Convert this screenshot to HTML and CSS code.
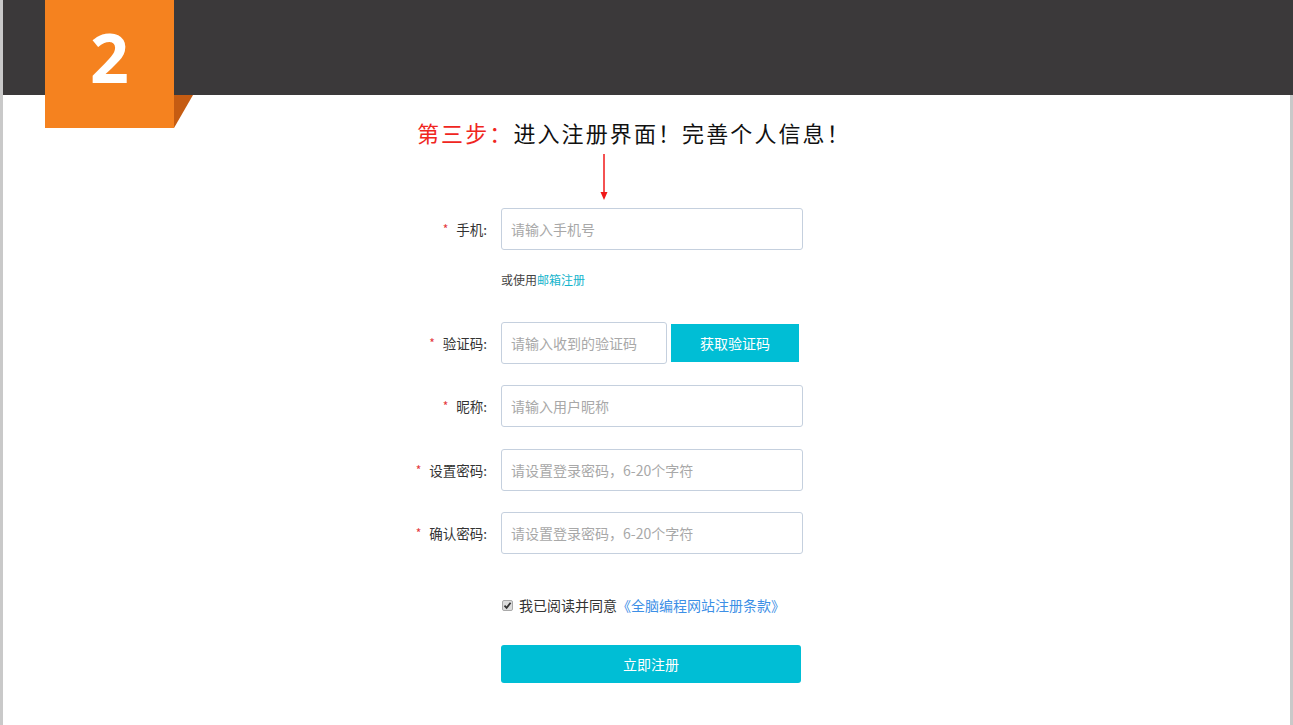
FILE: index.html
```html
<!DOCTYPE html>
<html lang="zh-CN">
<head>
<meta charset="utf-8">
<title>注册</title>
<link rel="stylesheet" href="styles.css">
</head>
<body>
<div class="page">
  <header class="topbar">
    <div class="badge"><span class="badge-num">2</span></div>
  </header>
  <main class="content">
    <h1 class="step-title"><span class="step-red">第三步：</span>进入注册界面！完善个人信息！</h1>
    <svg class="arrow" width="10" height="47" viewBox="0 0 10 47">
      <line x1="5" y1="0" x2="5" y2="40" stroke="#f01818" stroke-width="1.5"/>
      <polygon points="1.5,38 8.5,38 5,46" fill="#f01818"/>
    </svg>
    <form class="form">
      <div class="row">
        <label class="label"><span class="star">*</span>手机:</label>
        <input class="field" type="text" placeholder="请输入手机号">
      </div>
      <div class="hint">或使用<a class="hint-link" href="#">邮箱注册</a></div>
      <div class="row row-code">
        <label class="label"><span class="star">*</span>验证码:</label>
        <input class="field field-code" type="text" placeholder="请输入收到的验证码">
        <button class="btn-code" type="button">获取验证码</button>
      </div>
      <div class="row row-gap">
        <label class="label"><span class="star">*</span>昵称:</label>
        <input class="field" type="text" placeholder="请输入用户昵称">
      </div>
      <div class="row row-gap2">
        <label class="label"><span class="star">*</span>设置密码:</label>
        <input class="field" type="password" placeholder="请设置登录密码，6-20个字符">
      </div>
      <div class="row row-gap">
        <label class="label"><span class="star">*</span>确认密码:</label>
        <input class="field" type="password" placeholder="请设置登录密码，6-20个字符">
      </div>
      <div class="agree">
        <span class="check"><svg width="9" height="9" viewBox="0 0 9 9"><path d="M1.5 4.6 L3.6 6.8 L7.6 1.8" fill="none" stroke="#333" stroke-width="1.8"/></svg></span>
        <span class="agree-text">我已阅读并同意</span><a class="agree-link" href="#">《全脑编程网站注册条款》</a>
      </div>
      <button class="btn-submit" type="button">立即注册</button>
    </form>
  </main>
</div>
</body>
</html>
```
FILE: styles.css
```css
html, body {
  margin: 0;
  padding: 0;
  background: #ffffff;
}
body {
  font-family: "Noto Sans CJK SC", "Noto Sans", sans-serif;
}
.page {
  border-left: 3px solid #c9c9c9;
  height: 725px;
  box-sizing: border-box;
  display: flex;
  flex-direction: column;
  position: relative;
}
.topbar {
  height: 95px;
  background: #3b393a;
  flex: none;
}
.badge {
  position: absolute;
  left: 42px;
  top: 0;
  width: 129px;
  height: 128px;
  background: #f5821f;
  display: flex;
  align-items: center;
  justify-content: center;
  z-index: 2;
}
.badge::after {
  content: "";
  position: absolute;
  left: 129px;
  top: 95px;
  width: 19px;
  height: 33px;
  background: #c55c12;
  clip-path: polygon(0 0, 100% 0, 0 100%);
}
.badge-num {
  font-family: "Open Sans", "DejaVu Sans", sans-serif;
  font-weight: 700;
  font-size: 68px;
  line-height: 1;
  color: #ffffff;
  margin-top: -14px;
}
.content {
  flex: 1;
  border-right: 3px solid #c9c9c9;
  padding-left: 412px;
}
.step-title {
  margin: 26px 0 0 2px;
  font-family: "Liberation Serif", "Noto Sans CJK SC", serif;
  font-weight: 400;
  font-size: 22px;
  line-height: 28px;
  letter-spacing: 2.1px;
  color: #111111;
}
.step-red {
  color: #f0261e;
}
.arrow {
  display: block;
  margin: 5px 0 0 184px;
}
.form {
  margin-top: 7px;
  margin-left: -12px;
}
.row {
  display: flex;
  align-items: center;
  height: 42px;
}
.label {
  width: 84px;
  margin-right: 14px;
  text-align: right;
  font-size: 13.5px;
  color: #333333;
  white-space: nowrap;
}
.star {
  color: #e4393c;
  font-size: 12px;
  margin-right: 8px;
  position: relative;
  top: -1px;
}
.field {
  width: 302px;
  height: 42px;
  box-sizing: border-box;
  border: 1px solid #c5d0de;
  border-radius: 3px;
  padding: 0 9px;
  font-family: "Noto Sans CJK SC", sans-serif;
  font-size: 14px;
  color: #333;
  outline: none;
}
.field::placeholder {
  color: #a8a8a8;
}
.field-code {
  width: 166px;
}
.btn-code {
  margin-left: 4px;
  width: 128px;
  height: 38px;
  border: none;
  background: #00bed5;
  color: #ffffff;
  font-family: "Noto Sans CJK SC", sans-serif;
  font-size: 14px;
}
.hint {
  margin: 21px 0 0 98px;
  height: 18px;
  line-height: 18px;
  font-size: 12px;
  color: #444444;
}
.hint-link {
  color: #14b4cc;
  text-decoration: none;
}
.row-code {
  margin-top: 33px;
}
.row-gap {
  margin-top: 21px;
}
.row-gap2 {
  margin-top: 22px;
}
.agree {
  margin: 41px 0 0 99px;
  height: 20px;
  display: flex;
  align-items: center;
  font-size: 14px;
}
.check {
  width: 11px;
  height: 11px;
  box-sizing: border-box;
  border: 1px solid #a9a9a9;
  border-radius: 2px;
  background: #dcdcdc;
  display: flex;
  align-items: center;
  justify-content: center;
  margin-right: 6px;
}
.agree-text {
  color: #333333;
}
.agree-link {
  color: #3d8fe6;
  text-decoration: none;
}
.btn-submit {
  display: block;
  margin: 30px 0 0 98px;
  width: 300px;
  height: 38px;
  border: none;
  border-radius: 3px;
  background: #00bed5;
  color: #ffffff;
  font-family: "Noto Sans CJK SC", sans-serif;
  font-size: 14px;
}
```
